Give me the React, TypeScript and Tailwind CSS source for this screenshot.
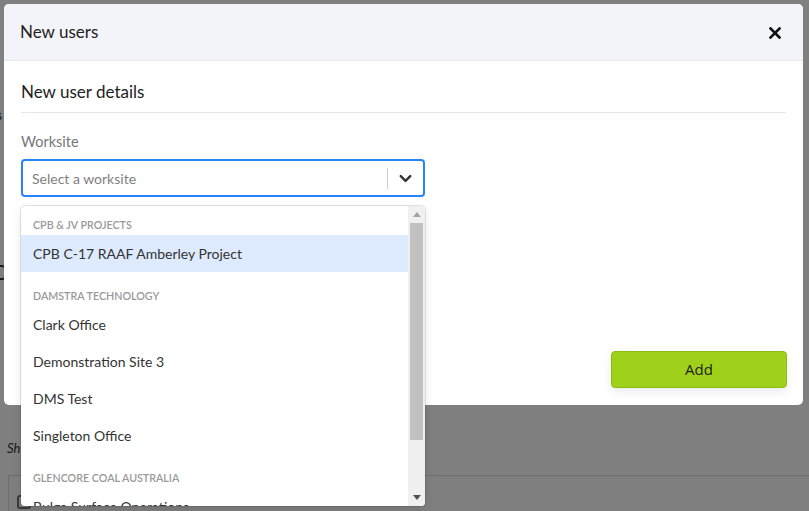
import { FiChevronDown } from "react-icons/fi";

const groups = [
  {
    label: "CPB & JV Projects",
    options: ["CPB C-17 RAAF Amberley Project"],
  },
  {
    label: "Damstra Technology",
    options: ["Clark Office", "Demonstration Site 3", "DMS Test", "Singleton Office"],
  },
  {
    label: "Glencore Coal Australia",
    options: ["Bulga Surface Operations", "Mangoola Open Cut"],
  },
];

const focused = "CPB C-17 RAAF Amberley Project";

function CloseIcon() {
  return (
    <svg width="12" height="12" viewBox="0 0 12 12" fill="none">
      <path d="M1.5 1.5 L10.5 10.5 M10.5 1.5 L1.5 10.5" stroke="#111" strokeWidth="2.6" strokeLinecap="square" />
    </svg>
  );
}

function FakeScrollbar() {
  return (
    <div className="w-[17px] shrink-0 bg-[#f0f0f0] flex flex-col items-center">
      <div className="h-[17px] w-full flex items-center justify-center">
        <svg width="8" height="5" viewBox="0 0 8 5">
          <path d="M0 5 L4 0 L8 5 Z" fill="#a3a3a3" />
        </svg>
      </div>
      <div className="w-[13px] h-[217px] bg-[#c1c1c1]"></div>
      <div className="flex-1"></div>
      <div className="h-[17px] w-full flex items-center justify-center">
        <svg width="8" height="5" viewBox="0 0 8 5">
          <path d="M0 0 L8 0 L4 5 Z" fill="#505050" />
        </svg>
      </div>
    </div>
  );
}

export default function App() {
  return (
    <div className="relative w-[809px] h-[511px] overflow-hidden bg-white font-['Lato',sans-serif] text-[#333]">
      {/* page behind the dialog */}
      <div className="flex flex-col">
        <div className="h-[106px]"></div>
        <div className="text-[14px] leading-[18px] -ml-[4px]">s</div>
        <div className="h-[135px]"></div>
        <div className="text-[22px] leading-[26px] -ml-[8px]">C</div>
        <div className="h-[154px]"></div>
        <div className="pl-[7px] text-[13px] italic leading-[18px]">Sh</div>
        <div className="h-[18px]"></div>
        <div className="ml-[8px] border-t border-l border-[#dcdcdc] h-[60px] pt-[19px] pl-[8px]">
          <div className="w-[14px] h-[14px] border-2 border-[#777] rounded-[3px]"></div>
        </div>
      </div>

      {/* overlay */}
      <div className="absolute inset-0 bg-black/50"></div>

      {/* dialog */}
      <div className="absolute left-[4px] top-[4px] w-[799px] h-[401px] bg-white rounded-[5px] flex flex-col">
        <div className="h-[57px] shrink-0 bg-[#f3f4f9] border-b border-[#e3e6ec] rounded-t-[5px] flex items-center justify-between pl-[16px] pr-[22px]">
          <h2 className="text-[17px] text-[#222]">New users</h2>
          <button className="pt-[1px]">
            <CloseIcon />
          </button>
        </div>

        <div className="flex-1 px-[17px] pt-[19px]">
          <h3 className="text-[17px] leading-[24px] text-[#222] pb-[8px] border-b border-[#e3e6ec]">
            New user details
          </h3>
          <div className="mt-[19px] text-[14.5px] leading-[20px] text-[#777]">Worksite</div>

          <div className="relative mt-[7px] w-[404px]">
            <div className="h-[38px] border-2 border-[#2684ff] rounded-[4px] flex items-center">
              <div className="flex-1 pl-[9px] text-[14px] text-[#808080]">Select a worksite</div>
              <div className="w-px h-[21px] bg-[#cccccc]"></div>
              <div className="w-[35px] flex items-center justify-center">
                <FiChevronDown className="text-[#333] text-[19px]" strokeWidth={3} />
              </div>
            </div>

            {/* menu */}
            <div className="absolute left-0 top-[47px] w-[404px] h-[300px] bg-white rounded-[4px] shadow-[0_0_0_1px_rgba(0,0,0,0.1),0_4px_11px_rgba(0,0,0,0.1)] overflow-hidden flex">
              <div className="flex-1 overflow-hidden pt-[4px]">
                {groups.map((g) => (
                  <div key={g.label} className="pt-[8px] pb-[9px]">
                    <div className="px-[12px] mb-[3px] text-[10.7px] leading-[14px] font-semibold uppercase text-[#999]">
                      {g.label}
                    </div>
                    {g.options.map((o) => (
                      <div
                        key={o}
                        className={`px-[12px] py-[8px] text-[14px] leading-[21px] ${
                          o === focused ? "bg-[#deebff]" : ""
                        }`}
                      >
                        {o}
                      </div>
                    ))}
                  </div>
                ))}
              </div>
              <FakeScrollbar />
            </div>
          </div>
        </div>

        <div className="flex justify-end pr-[16px] pb-[17px]">
          <button className="w-[176px] h-[37px] rounded-[4px] bg-[#a0d11a] border border-[#8fbc14] text-[15px] text-[#222] font-['Open_Sans',sans-serif] shadow-[0_4px_10px_rgba(0,0,0,0.08)]">
            Add
          </button>
        </div>
      </div>
    </div>
  );
}
